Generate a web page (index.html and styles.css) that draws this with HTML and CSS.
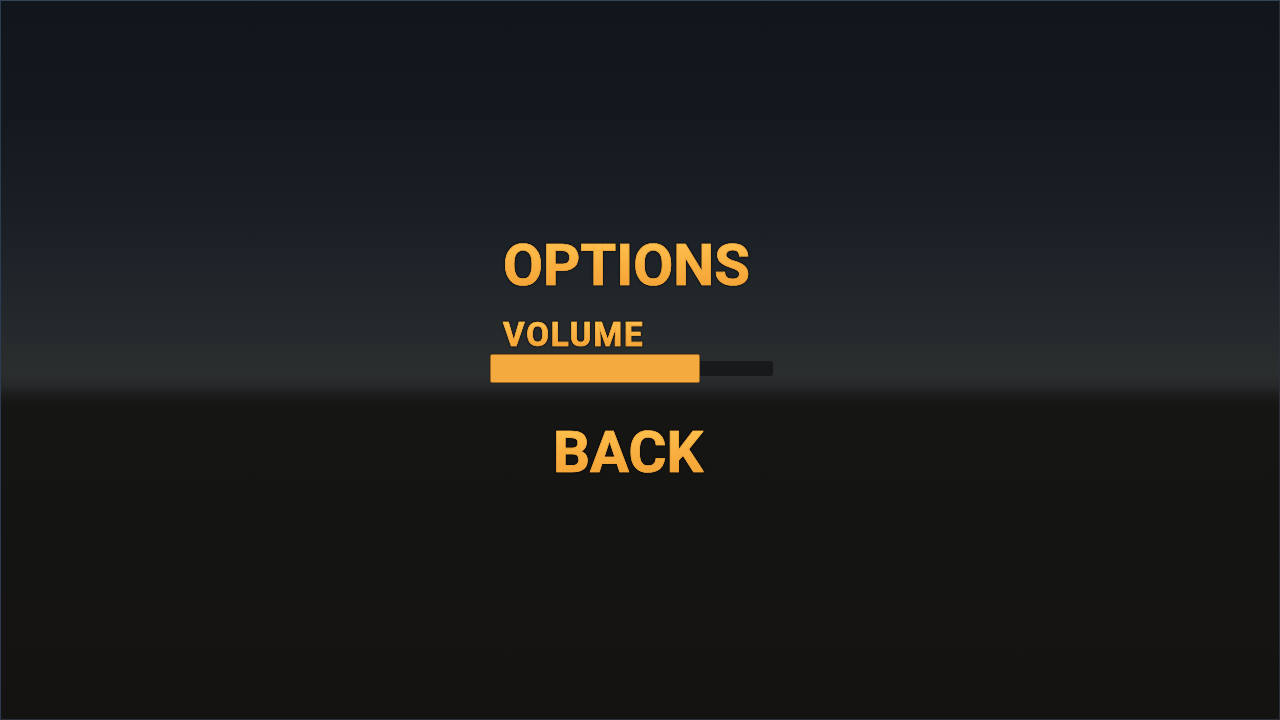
FILE: index.html
```html
<!DOCTYPE html>
<html lang="en">
<head>
<meta charset="utf-8">
<title>Options</title>
<link rel="stylesheet" href="styles.css">
</head>
<body>
<main class="screen">
  <section class="menu">
    <h1 class="menu-title">OPTIONS</h1>
    <div class="setting">
      <div class="setting-label">VOLUME</div>
      <div class="slider">
        <div class="slider-fill" style="width: 210px"></div>
        <div class="slider-rest"></div>
      </div>
    </div>
    <button class="menu-button">BACK</button>
  </section>
</main>
</body>
</html>
```

FILE: styles.css
```css
html, body {
  margin: 0;
  padding: 0;
  background: #141311;
}

.screen {
  box-sizing: border-box;
  width: 1280px;
  height: 720px;
  border: 1px solid #2a2f38;
  border-top-color: #34425a;
  border-left-color: #2c3a52;
  background: linear-gradient(to bottom,
    #11151c 0px,
    #141920 120px,
    #1a1f26 215px,
    #22272b 305px,
    #2b2e2e 372px,
    #26282a 384px,
    #1b1b1b 395px,
    #151513 406px,
    #141311 720px);
  display: flex;
  flex-direction: column;
  padding: 235px 0 0 489px;
  font-family: Roboto, "Liberation Sans", sans-serif;
  font-weight: 700;
}

.menu {
  width: 283px;
  display: flex;
  flex-direction: column;
}

/* orange gradient lettering with a thin dark rim */
.menu-title,
.setting-label,
.menu-button {
  margin: 0;
  background: linear-gradient(to bottom, #ffc450 0%, #f9b040 50%, #f2a033 100%);
  -webkit-background-clip: text;
  background-clip: text;
  color: transparent;
  -webkit-text-stroke: 0.7px rgba(248, 172, 62, 0.85);
  filter: drop-shadow(0 0 1px rgba(10, 8, 5, 0.9)) drop-shadow(0.5px 0.5px 0.5px rgba(0, 0, 0, 0.4));
  font-weight: 700;
  white-space: nowrap;
}

.menu-title {
  font-size: 58px;
  line-height: 58px;
  padding-left: 13px;
  align-self: flex-start;
}

.setting {
  margin-top: 25px;
  display: flex;
  flex-direction: column;
}

.setting-label {
  font-size: 33px;
  line-height: 32px;
  letter-spacing: 1.8px;
  padding-left: 13px;
  align-self: flex-start;
}

.slider {
  margin-top: 3px;
  height: 29px;
  display: flex;
  align-items: center;
}

.slider-fill {
  box-sizing: border-box;
  height: 29px;
  background: #f5aa40;
  border: 1px solid #9c6620;
  border-radius: 2px;
  box-shadow: 0 0 1px rgba(0, 0, 0, 0.6);
}

.slider-rest {
  flex: 1;
  height: 15px;
  background: #17191b;
  border-radius: 0 3px 3px 0;
}

.menu-button {
  margin-top: 40px;
  padding: 0 0 0 63px;
  border: 0;
  font-family: Roboto, "Liberation Sans", sans-serif;
  font-size: 58px;
  line-height: 58px;
  align-self: flex-start;
  cursor: pointer;
}
```
